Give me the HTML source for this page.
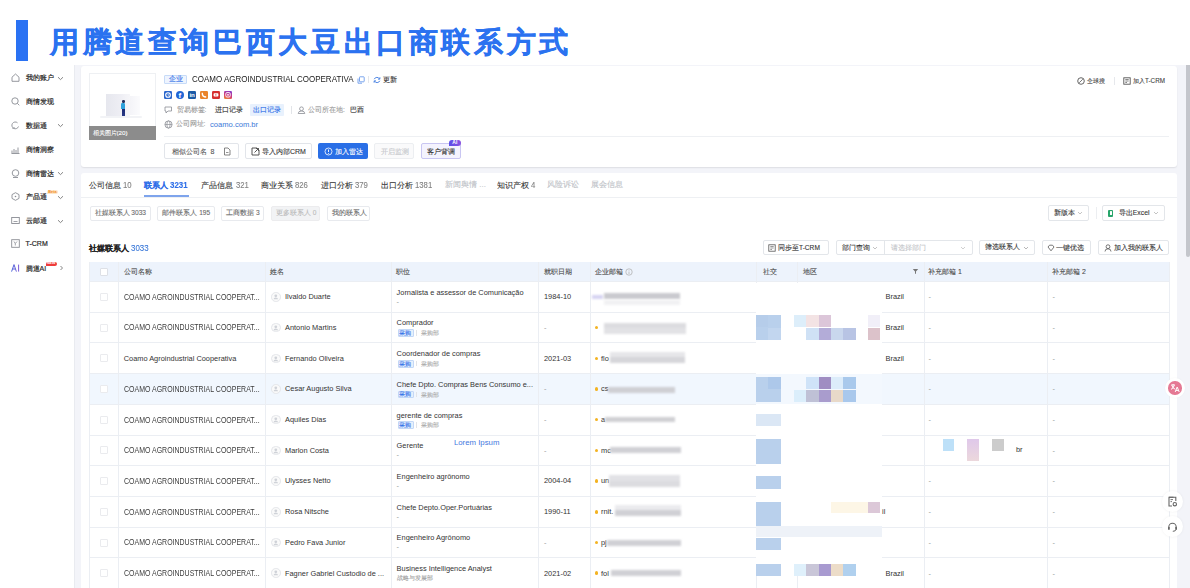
<!DOCTYPE html><html><head><meta charset="utf-8"><style>
*{box-sizing:border-box;margin:0;padding:0}
html,body{width:1190px;height:588px;overflow:hidden;background:#fff;font-family:"Liberation Sans",sans-serif;color:#333}
div,span{position:absolute;white-space:nowrap}
.t{line-height:1}
.c{-webkit-text-stroke-width:0.1px}
.btn{border:1px solid #dfe2e8;border-radius:2px;background:#fff}
.ico{line-height:0}
</style></head><body>

<div style="left:16px;top:20px;width:12px;height:41px;background:#2a72f3"></div>
<div class="t" style="left:50px;top:28.2px;font-size:28.6px;letter-spacing:3.62px;font-weight:700;color:#2b72f0;-webkit-text-stroke:0.4px #2b72f0">用腾道查询巴西大豆出口商联系方式</div>
<div style="left:74px;top:65px;width:1116px;height:523px;background:#f3f4f9"></div>
<div style="left:0px;top:65px;width:74px;height:523px;background:#fff"></div>
<div style="left:74px;top:65px;width:1px;height:523px;background:#e9ebf0"></div>
<div style="left:1186px;top:65px;width:4px;height:192px;background:#c4c6cc;border-radius:0 0 2px 2px"></div>
<svg style="position:absolute;left:11px;top:73.2px" width="9" height="9" viewBox="0 0 9 9"><path d="M1 4.2 L4.5 1 L8 4.2 V8.3 H1 Z" fill="none" stroke="#8a8d94" stroke-width="0.9"/></svg>
<div class="t c" style="left:25.6px;top:74.20px;font-size:7px;height:7px;color:#2a2a2a;-webkit-text-stroke-width:0.2px">我的账户</div>
<svg style="position:absolute;left:56.8px;top:75.5px" width="7" height="5" viewBox="0 0 7 5"><path d="M1 1.2 L3.5 3.6 L6 1.2" fill="none" stroke="#777" stroke-width="0.9"/></svg>
<svg style="position:absolute;left:11px;top:96.9px" width="9" height="9" viewBox="0 0 9 9"><circle cx="4" cy="4" r="3.2" fill="none" stroke="#8a8d94" stroke-width="0.9"/><path d="M6.4 6.4 L8.3 8.3" stroke="#8a8d94" stroke-width="0.9"/></svg>
<div class="t c" style="left:25.6px;top:97.90px;font-size:7px;height:7px;color:#2a2a2a;-webkit-text-stroke-width:0.2px">商情发现</div>
<svg style="position:absolute;left:11px;top:120.7px" width="9" height="9" viewBox="0 0 9 9"><path d="M7.5 5.5 A3.4 3.4 0 1 1 6.5 1.8" fill="none" stroke="#8a8d94" stroke-width="0.9"/><path d="M1.5 8 L3.5 6" stroke="#8a8d94" stroke-width="0.9"/></svg>
<div class="t c" style="left:25.6px;top:121.70px;font-size:7px;height:7px;color:#2a2a2a;-webkit-text-stroke-width:0.2px">数据通</div>
<svg style="position:absolute;left:56.8px;top:123.0px" width="7" height="5" viewBox="0 0 7 5"><path d="M1 1.2 L3.5 3.6 L6 1.2" fill="none" stroke="#777" stroke-width="0.9"/></svg>
<svg style="position:absolute;left:11px;top:144.6px" width="9" height="9" viewBox="0 0 9 9"><path d="M1 8.3 V5.5 M3 8.3 V4 M5 8.3 V5 M7 8.3 V2.5 M0.5 8.5 H8.5" stroke="#8a8d94" stroke-width="0.9"/></svg>
<div class="t c" style="left:25.6px;top:145.60px;font-size:7px;height:7px;color:#2a2a2a;-webkit-text-stroke-width:0.2px">商情洞察</div>
<svg style="position:absolute;left:11px;top:168.8px" width="9" height="9" viewBox="0 0 9 9"><circle cx="4.5" cy="4" r="3.3" fill="none" stroke="#8a8d94" stroke-width="0.9"/><path d="M2 8.5 H7" stroke="#8a8d94" stroke-width="0.9"/></svg>
<div class="t c" style="left:25.6px;top:169.80px;font-size:7px;height:7px;color:#2a2a2a;-webkit-text-stroke-width:0.2px">商情雷达</div>
<svg style="position:absolute;left:56.8px;top:171.10000000000002px" width="7" height="5" viewBox="0 0 7 5"><path d="M1 1.2 L3.5 3.6 L6 1.2" fill="none" stroke="#777" stroke-width="0.9"/></svg>
<svg style="position:absolute;left:11px;top:192.2px" width="9" height="9" viewBox="0 0 9 9"><path d="M4.5 0.7 L8 2.6 V6.4 L4.5 8.3 L1 6.4 V2.6 Z" fill="none" stroke="#8a8d94" stroke-width="0.9"/><circle cx="4.5" cy="4.5" r="0.8" fill="#8a8d94"/></svg>
<div class="t c" style="left:25.6px;top:193.20px;font-size:7px;height:7px;color:#2a2a2a;-webkit-text-stroke-width:0.2px">产品通</div>
<svg style="position:absolute;left:56.8px;top:194.5px" width="7" height="5" viewBox="0 0 7 5"><path d="M1 1.2 L3.5 3.6 L6 1.2" fill="none" stroke="#777" stroke-width="0.9"/></svg>
<svg style="position:absolute;left:11px;top:216.3px" width="9" height="9" viewBox="0 0 9 9"><rect x="0.7" y="1.5" width="7.6" height="6" fill="none" stroke="#8a8d94" stroke-width="0.9"/><path d="M2.5 5.5 H6.5" stroke="#8a8d94" stroke-width="0.8"/></svg>
<div class="t c" style="left:25.6px;top:217.30px;font-size:7px;height:7px;color:#2a2a2a;-webkit-text-stroke-width:0.2px">云邮通</div>
<svg style="position:absolute;left:56.8px;top:218.60000000000002px" width="7" height="5" viewBox="0 0 7 5"><path d="M1 1.2 L3.5 3.6 L6 1.2" fill="none" stroke="#777" stroke-width="0.9"/></svg>
<svg style="position:absolute;left:11px;top:239.2px" width="9" height="9" viewBox="0 0 9 9"><rect x="0.7" y="0.7" width="7.6" height="7.6" fill="none" stroke="#8a8d94" stroke-width="0.9"/><path d="M3 2.5 L4.3 4.5 L6 2.5 M4.3 4.5 V6.5" fill="none" stroke="#8a8d94" stroke-width="0.8"/></svg>
<div class="t" style="left:25.6px;top:240.20px;font-size:7px;height:7px;color:#2a2a2a;-webkit-text-stroke-width:0.2px">T-CRM</div>
<svg style="position:absolute;left:10.5px;top:264.2px" width="9" height="8" viewBox="0 0 9 8"><defs><linearGradient id="aig" x1="0" x2="1"><stop offset="0" stop-color="#4a64d8"/><stop offset="1" stop-color="#7a5ad8"/></linearGradient></defs><path d="M0.6 7.6 L3 0.6 L5.4 7.6 M1.5 5 H4.5 M7.6 0.6 V7.6" fill="none" stroke="url(#aig)" stroke-width="1"/></svg>
<div class="t c" style="left:25.6px;top:264.70px;font-size:7px;height:7px;color:#2a2a2a;-webkit-text-stroke-width:0.2px">腾道AI</div>
<svg style="position:absolute;left:59px;top:265.2px" width="5" height="6" viewBox="0 0 5 6"><path d="M1.5 1 L3.5 3 L1.5 5" fill="none" stroke="#666" stroke-width="0.8"/></svg>
<div style="left:47.4px;top:190.4px;width:10.2px;height:4px;background:#fde6c8;border-radius:2px 2px 2px 0"></div>
<div class="t" style="left:48.3px;top:190.6px;font-size:3.8px;color:#f08a20;font-weight:700">Beta</div>
<div style="left:45.5px;top:261.6px;width:11.3px;height:4.6px;background:#ee3b3b;border-radius:2px 2px 2px 0"></div>
<div class="t" style="left:47px;top:262.2px;font-size:3.6px;color:#fff;font-weight:700">NEW</div>
<div style="left:81px;top:66px;width:1096px;height:101px;background:#fff;border-radius:3px;box-shadow:0 1px 1.5px rgba(0,0,0,0.09)"></div>
<div style="left:89px;top:73px;width:67px;height:67px;background:#fff;border:1px solid #eef0f3"></div>
<div style="left:105.5px;top:94px;width:24px;height:23.5px;background:linear-gradient(90deg,#e6e7ee,#eeeef4 60%,#f6f6f9);"></div>
<div style="left:129.5px;top:96px;width:10px;height:19px;background:linear-gradient(90deg,#f4f4f8,#fbfbfd)"></div>
<div style="left:100px;top:115.8px;width:42px;height:2px;background:#f2f3f6;border-radius:1px"></div>
<div style="left:122.2px;top:100.3px;width:2.4px;height:2.4px;background:#24305e;border-radius:50%"></div>
<div style="left:121.3px;top:102.6px;width:4.2px;height:6.6px;background:#2fa2dc;border-radius:1.2px 1.2px 0 0"></div>
<div style="left:121.8px;top:109.2px;width:3.2px;height:7px;background:linear-gradient(180deg,#1c2a72,#2a3a88)"></div>
<div style="left:89px;top:125.8px;width:67px;height:14.2px;background:#8c8c8c"></div>
<div class="t c" style="left:92.5px;top:129.90px;font-size:6.2px;height:6.2px;color:#fff;">相关图片(20)</div>
<div style="left:164.2px;top:74.7px;width:23.2px;height:9.8px;background:#eef4fe;border:1px solid #c7dbf8;border-radius:1px"></div>
<div class="t c" style="left:169px;top:76.20px;font-size:6.8px;height:6.8px;color:#2d6ee8;">企业</div>
<div class="t" style="left:191.5px;top:74.95px;font-size:9.3px;height:9.3px;color:#222;transform:scaleX(0.86);transform-origin:0 50%;">COAMO AGROINDUSTRIAL COOPERATIVA</div>
<svg style="position:absolute;left:356.5px;top:75.5px" width="8" height="8" viewBox="0 0 8 8"><rect x="2.5" y="0.8" width="4.7" height="5" rx="0.6" fill="none" stroke="#5b8fe8" stroke-width="0.8"/><path d="M1 2.5 V7.2 H5" fill="none" stroke="#5b8fe8" stroke-width="0.8"/></svg>
<div style="left:368px;top:76px;width:0.8px;height:7px;background:#e4e6ea"></div>
<svg style="position:absolute;left:372.5px;top:75.5px" width="8" height="8" viewBox="0 0 8 8"><path d="M6.6 3 A3 3 0 0 0 1.2 3.2 M1.4 5 A3 3 0 0 0 6.8 4.8" fill="none" stroke="#3b78e0" stroke-width="0.9"/><path d="M6.9 1.2 V3.2 H5" fill="none" stroke="#3b78e0" stroke-width="0.8"/><path d="M1.1 6.8 V4.8 H3" fill="none" stroke="#3b78e0" stroke-width="0.8"/></svg>
<div class="t c" style="left:383px;top:76.10px;font-size:7px;height:7px;color:#333;">更新</div>
<div style="left:164.2px;top:91px;width:8px;height:7.5px;background:#2a66cc;border-radius:1.2px"></div>
<svg style="position:absolute;left:164.2px;top:91px" width="8" height="7.5" viewBox="0 0 8 7.5"><circle cx="4" cy="4" r="2.3" fill="none" stroke="#fff" stroke-width="1.1"/><path d="M4 2.8 V4.2 H5" fill="none" stroke="#fff" stroke-width="0.6"/></svg>
<div style="left:176.0px;top:90.6px;width:8.4px;height:8.4px;background:#2166d6;border-radius:50%"></div>
<div class="t" style="left:178.5px;top:91.6px;font-size:8px;font-weight:700;color:#fff">f</div>
<div style="left:188.2px;top:91px;width:8px;height:7.5px;background:#1b5aa6;border-radius:1.2px"></div>
<div class="t" style="left:189.5px;top:92.2px;font-size:6.2px;font-weight:700;color:#fff;letter-spacing:-0.2px">in</div>
<div style="left:200.2px;top:91px;width:8px;height:7.5px;background:#ea842a;border-radius:1.2px"></div>
<svg style="position:absolute;left:200.2px;top:91px" width="8" height="7.5" viewBox="0 0 8 7.5"><path d="M2.3 1.8 Q2 6 6.2 6" fill="none" stroke="#fff" stroke-width="1.4"/></svg>
<div style="left:212.2px;top:91px;width:8px;height:7.5px;background:#d62e2e;border-radius:1.2px"></div>
<svg style="position:absolute;left:212.2px;top:91px" width="8" height="7.5" viewBox="0 0 8 7.5"><rect x="1.6" y="2.2" width="4.8" height="3.4" rx="0.8" fill="#fff"/><path d="M3.4 3 L4.9 3.9 L3.4 4.8 Z" fill="#d62e2e"/></svg>
<div style="left:224.2px;top:91px;width:8px;height:7.5px;background:linear-gradient(200deg,#7b3fd4,#d23a7a 55%,#f0902a);border-radius:1.2px"></div>
<svg style="position:absolute;left:224.2px;top:91px" width="8" height="7.5" viewBox="0 0 8 7.5"><rect x="1.8" y="1.6" width="4.4" height="4.4" rx="1.2" fill="none" stroke="#fff" stroke-width="0.9"/><circle cx="4" cy="3.8" r="0.9" fill="#fff"/></svg>
<svg style="position:absolute;left:164px;top:106.2px" width="9" height="8" viewBox="0 0 9 8"><path d="M1 1 H7.5 V5 H4 L2 7 V5 H1 Z" fill="none" stroke="#8a8d94" stroke-width="0.8"/></svg>
<div class="t c" style="left:176.5px;top:106.80px;font-size:6.8px;height:6.8px;color:#999;">贸易标签:</div>
<div class="t c" style="left:214.5px;top:106.80px;font-size:6.8px;height:6.8px;color:#333;">进口记录</div>
<div style="left:249.5px;top:104.2px;width:34px;height:12px;background:#e8f1fd;border-radius:1px"></div>
<div class="t c" style="left:253px;top:106.80px;font-size:6.8px;height:6.8px;color:#2d6ee8;">出口记录</div>
<div style="left:290.5px;top:106px;width:0.8px;height:8px;background:#e2e4e8"></div>
<svg style="position:absolute;left:296.5px;top:106.2px" width="9" height="8" viewBox="0 0 9 8"><circle cx="4.5" cy="2.8" r="1.9" fill="none" stroke="#8a8d94" stroke-width="0.8"/><path d="M1.2 7.5 Q1.2 5 4.5 5 Q7.8 5 7.8 7.5 Z" fill="none" stroke="#8a8d94" stroke-width="0.8"/></svg>
<div class="t c" style="left:308px;top:106.80px;font-size:6.8px;height:6.8px;color:#999;">公司所在地:</div>
<div class="t c" style="left:350px;top:106.80px;font-size:6.8px;height:6.8px;color:#333;">巴西</div>
<svg style="position:absolute;left:164px;top:120.2px" width="9" height="9" viewBox="0 0 9 9"><circle cx="4.5" cy="4.5" r="3.6" fill="none" stroke="#8a8d94" stroke-width="0.8"/><ellipse cx="4.5" cy="4.5" rx="1.6" ry="3.6" fill="none" stroke="#8a8d94" stroke-width="0.7"/><path d="M1 4.5 H8" stroke="#8a8d94" stroke-width="0.7"/></svg>
<div class="t c" style="left:175.5px;top:121.00px;font-size:6.8px;height:6.8px;color:#999;">公司网址:</div>
<div class="t" style="left:210px;top:120.60px;font-size:7.6px;height:7.6px;color:#3a78d8;">coamo.com.br</div>
<div style="left:164px;top:136.3px;width:1005px;height:0.8px;background:#eef0f3"></div>
<div style="left:164.4px;top:143px;width:75px;height:16.2px;border:1px solid #e2e5ea;border-radius:2px;background:#fff"></div>
<div class="t c" style="left:171.5px;top:147.60px;font-size:7px;height:7px;color:#555;">相似公司名&nbsp; 8</div>
<svg style="position:absolute;left:223px;top:147px" width="8" height="9" viewBox="0 0 8 9"><path d="M1.5 1 H5 L7 3 V8 H1.5 Z" fill="none" stroke="#666" stroke-width="0.8"/><path d="M3 5.5 H5.5" stroke="#666" stroke-width="0.7"/></svg>
<div style="left:245.4px;top:143px;width:66.4px;height:16.2px;border:1px solid #e2e5ea;border-radius:2px;background:#fff"></div>
<svg style="position:absolute;left:251px;top:147px" width="9" height="9" viewBox="0 0 9 9"><path d="M6 1 H1 V8 H8 V3" fill="none" stroke="#444" stroke-width="0.9"/><path d="M3.5 5.5 L7.5 1.5 M5 1.5 H7.5 V4" fill="none" stroke="#444" stroke-width="0.9"/></svg>
<div class="t c" style="left:262px;top:147.60px;font-size:7px;height:7px;color:#333;">导入内部CRM</div>
<div style="left:318.4px;top:143px;width:49.4px;height:16.2px;background:#2a6fe6;border-radius:2px"></div>
<svg style="position:absolute;left:323.5px;top:147px" width="9" height="9" viewBox="0 0 9 9"><circle cx="4.5" cy="4.5" r="3.5" fill="none" stroke="#fff" stroke-width="0.8"/><path d="M4.5 2.5 V5 M4.5 6 V6.8" stroke="#fff" stroke-width="0.9"/></svg>
<div class="t c" style="left:334.5px;top:147.60px;font-size:7px;height:7px;color:#fff;">加入雷达</div>
<div style="left:374px;top:143px;width:40px;height:16.2px;border:1px solid #eceef1;border-radius:2px;background:#fafafb"></div>
<div class="t c" style="left:380.5px;top:147.60px;font-size:7px;height:7px;color:#c4c6ca;">开启监测</div>
<div style="left:421px;top:143px;width:39.8px;height:16.2px;border:1px solid #c9c6f2;border-radius:2px;background:#f4f3fe"></div>
<div class="t c" style="left:427px;top:147.60px;font-size:7px;height:7px;color:#333;">客户背调</div>
<div style="left:449px;top:139.5px;width:12px;height:6.2px;background:linear-gradient(90deg,#5a4ee8,#8a52e0);border-radius:3px 3px 3px 0"></div>
<div class="t" style="left:452.3px;top:140.2px;font-size:5px;color:#fff;font-weight:700">AI</div>
<svg style="position:absolute;left:1076.5px;top:76.8px" width="8" height="8" viewBox="0 0 8 8"><circle cx="4" cy="4" r="3.3" fill="none" stroke="#555" stroke-width="0.9"/><path d="M2.2 5.8 L5.8 2.2" stroke="#555" stroke-width="0.8"/></svg>
<div class="t c" style="left:1086.7px;top:78.05px;font-size:6.3px;height:6.3px;color:#444;">全球搜</div>
<div style="left:1114.3px;top:76.5px;width:0.8px;height:8px;background:#e6e8ec"></div>
<svg style="position:absolute;left:1123px;top:76.8px" width="8" height="8" viewBox="0 0 8 8"><rect x="0.8" y="0.8" width="6.4" height="6.4" fill="none" stroke="#555" stroke-width="0.9"/><path d="M2.3 2.5 H5.7 M2.3 4 H5.7 M2.3 5.5 H4" stroke="#555" stroke-width="0.7"/></svg>
<div class="t c" style="left:1133px;top:78.05px;font-size:6.3px;height:6.3px;color:#444;">加入T-CRM</div>
<div style="left:81px;top:172.5px;width:1096px;height:420px;background:#fff;border-radius:3px"></div>
<div class="t c" style="left:88.8px;top:181.00px;font-size:8px;height:8px;color:#333;">公司信息<span style="position:static;display:inline-block;color:#808080;font-size:9px;transform:scaleX(0.86);transform-origin:0 50%;vertical-align:-0.5px;margin-left:2.4px">10</span></div>
<div class="t c" style="left:144px;top:181.00px;font-size:8px;height:8px;color:#2d6ee8;"><b>联系人</b><span style="position:static;display:inline-block;font-size:9px;font-weight:700;transform:scaleX(0.88);transform-origin:0 50%;vertical-align:-0.5px;margin-left:2.4px">3231</span></div>
<div class="t c" style="left:201.4px;top:181.00px;font-size:8px;height:8px;color:#333;">产品信息<span style="position:static;display:inline-block;color:#808080;font-size:9px;transform:scaleX(0.86);transform-origin:0 50%;vertical-align:-0.5px;margin-left:2.4px">321</span></div>
<div class="t c" style="left:261px;top:181.00px;font-size:8px;height:8px;color:#333;">商业关系<span style="position:static;display:inline-block;color:#808080;font-size:9px;transform:scaleX(0.86);transform-origin:0 50%;vertical-align:-0.5px;margin-left:2.4px">826</span></div>
<div class="t c" style="left:320.6px;top:181.00px;font-size:8px;height:8px;color:#333;">进口分析<span style="position:static;display:inline-block;color:#808080;font-size:9px;transform:scaleX(0.86);transform-origin:0 50%;vertical-align:-0.5px;margin-left:2.4px">379</span></div>
<div class="t c" style="left:380.6px;top:181.00px;font-size:8px;height:8px;color:#333;">出口分析<span style="position:static;display:inline-block;color:#808080;font-size:9px;transform:scaleX(0.86);transform-origin:0 50%;vertical-align:-0.5px;margin-left:2.4px">1381</span></div>
<div class="t c" style="left:445px;top:181.00px;font-size:8px;height:8px;color:#c0c3c8;">新闻舆情 ...</div>
<div class="t c" style="left:496.6px;top:181.00px;font-size:8px;height:8px;color:#333;">知识产权<span style="position:static;display:inline-block;color:#808080;font-size:9px;transform:scaleX(0.86);transform-origin:0 50%;vertical-align:-0.5px;margin-left:2.4px">4</span></div>
<div class="t c" style="left:547px;top:181.00px;font-size:8px;height:8px;color:#c0c3c8;">风险诉讼</div>
<div class="t c" style="left:590.9px;top:181.00px;font-size:8px;height:8px;color:#c0c3c8;">展会信息</div>
<div style="left:144px;top:195.2px;width:45.2px;height:1.4px;background:#7ea4ec"></div>
<div style="left:81px;top:196.6px;width:1096px;height:0.8px;background:#eef0f3"></div>
<div style="left:89.5px;top:206px;width:61.9px;height:14.7px;border:1px solid #e8eaee;border-radius:2px;background:#fff"></div>
<div class="t c" style="left:94.5px;top:210.10px;font-size:6.6px;height:6.6px;color:#6a6a6a;">社媒联系人 3033</div>
<div style="left:157.3px;top:206px;width:58.2px;height:14.7px;border:1px solid #e8eaee;border-radius:2px;background:#fff"></div>
<div class="t c" style="left:162.3px;top:210.10px;font-size:6.6px;height:6.6px;color:#6a6a6a;">邮件联系人 195</div>
<div style="left:221.2px;top:206px;width:43.2px;height:14.7px;border:1px solid #e8eaee;border-radius:2px;background:#fff"></div>
<div class="t c" style="left:226.2px;top:210.10px;font-size:6.6px;height:6.6px;color:#6a6a6a;">工商数据 3</div>
<div style="left:270.8px;top:206px;width:49.5px;height:14.7px;border:1px solid #ececee;border-radius:2px;background:#f2f3f5"></div>
<div class="t c" style="left:275.8px;top:210.10px;font-size:6.6px;height:6.6px;color:#bbb;">更多联系人 0</div>
<div style="left:327px;top:206px;width:43px;height:14.7px;border:1px solid #e8eaee;border-radius:2px;background:#fff"></div>
<div class="t c" style="left:332px;top:210.10px;font-size:6.6px;height:6.6px;color:#6a6a6a;">我的联系人</div>
<div style="left:1047.6px;top:205.3px;width:41.8px;height:15.9px;border:1px solid #e3e6ea;border-radius:2px;background:#fff"></div>
<div class="t c" style="left:1054px;top:209.90px;font-size:6.8px;height:6.8px;color:#333;">新版本</div>
<svg style="position:absolute;left:1077px;top:211px" width="6" height="4" viewBox="0 0 6 4"><path d="M1 1 L3 3 L5 1" fill="none" stroke="#aaa" stroke-width="0.7"/></svg>
<div style="left:1095.6px;top:207px;width:0.8px;height:12px;background:#eceef1"></div>
<div style="left:1102.4px;top:205.3px;width:62.6px;height:15.9px;border:1px solid #e3e6ea;border-radius:2px;background:#fff"></div>
<div style="left:1108.2px;top:209.5px;width:5.3px;height:7.5px;background:#27a56a;border-radius:1px"></div>
<div style="left:1109.6px;top:211.3px;width:2.6px;height:3.8px;background:#fff;border-radius:0.5px"></div>
<div class="t c" style="left:1118.8px;top:209.90px;font-size:6.8px;height:6.8px;color:#333;">导出Excel</div>
<svg style="position:absolute;left:1153px;top:211px" width="6" height="4" viewBox="0 0 6 4"><path d="M1 1 L3 3 L5 1" fill="none" stroke="#aaa" stroke-width="0.7"/></svg>
<div class="t c" style="left:88.8px;top:243.70px;font-size:8px;height:8px;color:#222;"><b>社媒联系人</b> <span style="position:static;display:inline-block;color:#3a78d8;font-size:9px;transform:scaleX(0.88);transform-origin:0 50%;vertical-align:-0.5px">3033</span></div>
<div style="left:763px;top:240.4px;width:65.8px;height:14.7px;border:1px solid #e3e6ea;border-radius:2px;background:#fff"></div>
<svg style="position:absolute;left:767.5px;top:243.8px" width="8" height="8" viewBox="0 0 8 8"><rect x="0.8" y="0.8" width="6.4" height="6.4" fill="none" stroke="#555" stroke-width="0.8"/><path d="M2.3 2.5 H5.7 M2.3 4 H5.7 M2.3 5.5 H4" stroke="#555" stroke-width="0.6"/></svg>
<div class="t c" style="left:778px;top:244.50px;font-size:6.6px;height:6.6px;color:#333;">同步至T-CRM</div>
<div style="left:836.2px;top:240.4px;width:137px;height:14.7px;border:1px solid #e3e6ea;border-radius:2px;background:#fff"></div>
<div style="left:883.9px;top:240.4px;width:0.8px;height:14.7px;background:#e3e6ea"></div>
<div class="t c" style="left:842px;top:244.50px;font-size:6.6px;height:6.6px;color:#333;">部门查询</div>
<svg style="position:absolute;left:872px;top:246px" width="6" height="4" viewBox="0 0 6 4"><path d="M1 1 L3 3 L5 1" fill="none" stroke="#aaa" stroke-width="0.7"/></svg>
<div class="t c" style="left:891px;top:244.50px;font-size:6.6px;height:6.6px;color:#c2c4c8;">请选择部门</div>
<svg style="position:absolute;left:960px;top:246px" width="6" height="4" viewBox="0 0 6 4"><path d="M1 1 L3 3 L5 1" fill="none" stroke="#bbb" stroke-width="0.7"/></svg>
<div style="left:979.3px;top:240.4px;width:56.2px;height:14.7px;border:1px solid #e3e6ea;border-radius:2px;background:#fff"></div>
<div class="t c" style="left:985px;top:244.40px;font-size:6.8px;height:6.8px;color:#333;">筛选联系人</div>
<svg style="position:absolute;left:1023px;top:246px" width="6" height="4" viewBox="0 0 6 4"><path d="M1 1 L3 3 L5 1" fill="none" stroke="#999" stroke-width="0.7"/></svg>
<div style="left:1042px;top:240.4px;width:49.3px;height:14.7px;border:1px solid #e3e6ea;border-radius:2px;background:#fff"></div>
<svg style="position:absolute;left:1047px;top:243.8px" width="8" height="8" viewBox="0 0 8 8"><path d="M1 3 L2.5 1.2 H5.5 L7 3 L4 6.8 Z" fill="none" stroke="#555" stroke-width="0.8"/></svg>
<div class="t c" style="left:1055.5px;top:244.50px;font-size:6.6px;height:6.6px;color:#333;">一键优选</div>
<div style="left:1098.3px;top:240.4px;width:70.7px;height:14.7px;border:1px solid #e3e6ea;border-radius:2px;background:#fff"></div>
<svg style="position:absolute;left:1103.5px;top:243.5px" width="8" height="8" viewBox="0 0 8 8"><circle cx="4" cy="2.7" r="1.9" fill="none" stroke="#555" stroke-width="0.8"/><path d="M1 7.5 Q1 4.8 4 4.8 Q7 4.8 7 7.5" fill="none" stroke="#555" stroke-width="0.8"/></svg>
<div class="t c" style="left:1114px;top:244.50px;font-size:6.6px;height:6.6px;color:#333;">加入我的联系人</div>
<div style="left:89px;top:261.5px;width:1080px;height:20.0px;background:#edf3fc"></div>
<div style="left:89px;top:373.6px;width:1080px;height:30.7px;background:#f1f7fe"></div>
<div style="left:89px;top:281.0px;width:1080px;height:0.8px;background:#ebeef3"></div>
<div style="left:89px;top:311.7px;width:1080px;height:0.8px;background:#ebeef3"></div>
<div style="left:89px;top:342.4px;width:1080px;height:0.8px;background:#ebeef3"></div>
<div style="left:89px;top:373.1px;width:1080px;height:0.8px;background:#ebeef3"></div>
<div style="left:89px;top:403.8px;width:1080px;height:0.8px;background:#ebeef3"></div>
<div style="left:89px;top:434.5px;width:1080px;height:0.8px;background:#ebeef3"></div>
<div style="left:89px;top:465.2px;width:1080px;height:0.8px;background:#ebeef3"></div>
<div style="left:89px;top:495.9px;width:1080px;height:0.8px;background:#ebeef3"></div>
<div style="left:89px;top:526.6px;width:1080px;height:0.8px;background:#ebeef3"></div>
<div style="left:89px;top:557.3px;width:1080px;height:0.8px;background:#ebeef3"></div>
<div style="left:89px;top:588.0px;width:1080px;height:0.8px;background:#ebeef3"></div>
<div style="left:117.69999999999999px;top:261.5px;width:0.8px;height:326.5px;background:#ebeef3"></div>
<div style="left:264.90000000000003px;top:261.5px;width:0.8px;height:326.5px;background:#ebeef3"></div>
<div style="left:390.70000000000005px;top:261.5px;width:0.8px;height:326.5px;background:#ebeef3"></div>
<div style="left:538.2px;top:261.5px;width:0.8px;height:326.5px;background:#ebeef3"></div>
<div style="left:589.7px;top:261.5px;width:0.8px;height:326.5px;background:#ebeef3"></div>
<div style="left:756.1px;top:261.5px;width:0.8px;height:326.5px;background:#ebeef3"></div>
<div style="left:796.9px;top:261.5px;width:0.8px;height:326.5px;background:#ebeef3"></div>
<div style="left:923.5px;top:261.5px;width:0.8px;height:326.5px;background:#ebeef3"></div>
<div style="left:1046.6px;top:261.5px;width:0.8px;height:326.5px;background:#ebeef3"></div>
<div style="left:88.6px;top:261.5px;width:0.8px;height:326.5px;background:#ebeef3"></div>
<div style="left:1168.6px;top:261.5px;width:0.8px;height:326.5px;background:#ebeef3"></div>
<div style="left:100px;top:267.5px;width:8px;height:8px;border:1px solid #dde0e6;border-radius:1px;background:#fff"></div>
<div class="t c" style="left:123.7px;top:268.75px;font-size:6.9px;height:6.9px;color:#4a4a4a;">公司名称</div>
<div class="t c" style="left:270.1px;top:268.75px;font-size:6.9px;height:6.9px;color:#4a4a4a;">姓名</div>
<div class="t c" style="left:396.1px;top:268.75px;font-size:6.9px;height:6.9px;color:#4a4a4a;">职位</div>
<div class="t c" style="left:544px;top:268.75px;font-size:6.9px;height:6.9px;color:#4a4a4a;">就职日期</div>
<div class="t c" style="left:595.1px;top:268.75px;font-size:6.9px;height:6.9px;color:#4a4a4a;">企业邮箱</div>
<div class="t c" style="left:763px;top:268.75px;font-size:6.9px;height:6.9px;color:#4a4a4a;">社交</div>
<div class="t c" style="left:803px;top:268.75px;font-size:6.9px;height:6.9px;color:#4a4a4a;">地区</div>
<div class="t c" style="left:928px;top:268.75px;font-size:6.9px;height:6.9px;color:#4a4a4a;">补充邮箱 1</div>
<div class="t c" style="left:1052px;top:268.75px;font-size:6.9px;height:6.9px;color:#4a4a4a;">补充邮箱 2</div>
<svg style="position:absolute;left:625px;top:267.8px" width="8" height="8" viewBox="0 0 8 8"><circle cx="4" cy="4" r="3.2" fill="none" stroke="#aaa" stroke-width="0.7"/><path d="M4 3.5 V6 M4 2.3 V2.9" stroke="#aaa" stroke-width="0.7"/></svg>
<svg style="position:absolute;left:911.5px;top:268px" width="7" height="7" viewBox="0 0 7 7"><path d="M0.8 1 H6.2 L4 3.5 V6 L3 5.5 V3.5 Z" fill="#777"/></svg>
<div style="left:100px;top:292.9px;width:8px;height:8px;border:1px solid #eaebee;border-radius:1px;background:#fff"></div>
<div class="t" style="left:123.7px;top:292.70px;font-size:8.4px;height:8.4px;color:#3d3d3d;transform:scaleX(0.835);transform-origin:0 50%;">COAMO AGROINDUSTRIAL COOPERAT...</div>
<div style="left:271px;top:292.09999999999997px;width:9.6px;height:9.6px;border:0.8px solid #e4e6ea;border-radius:50%;background:#fafafa"></div>
<svg style="position:absolute;left:271px;top:292.09999999999997px" width="9.6" height="9.6" viewBox="0 0 9.6 9.6"><circle cx="4.8" cy="3.8" r="1.4" fill="#cfd2d8"/><path d="M2.6 7.2 Q2.6 5.4 4.8 5.4 Q7 5.4 7 7.2 Z" fill="#cfd2d8"/></svg>
<div class="t" style="left:285px;top:293.20px;font-size:7.4px;height:7.4px;color:#333;">Ilvaldo Duarte</div>
<div class="t" style="left:396.6px;top:288.70px;font-size:7.4px;height:7.4px;color:#333;">Jornalista e assessor de Comunicação</div>
<div class="t" style="left:396.6px;top:297.80px;font-size:7.4px;height:7.4px;color:#999;">-</div>
<div class="t" style="left:544px;top:293.20px;font-size:7.4px;height:7.4px;color:#333;">1984-10</div>
<div style="left:592px;top:294.8px;width:11px;height:3.8000000000000114px;background:#d6d4f2;filter:blur(0.9px)"></div>
<div style="left:604px;top:293.2px;width:76.29999999999995px;height:5.800000000000011px;background:#cacacf;filter:blur(0.9px)"></div>
<div style="left:604px;top:299.5px;width:76px;height:5.0px;background:#f1f1f3;filter:blur(0.9px)"></div>
<div class="t" style="left:885.5px;top:293.20px;font-size:7.4px;height:7.4px;color:#333;">Brazil</div>
<div class="t" style="left:928.5px;top:293.20px;font-size:7.4px;height:7.4px;color:#999;">-</div>
<div class="t" style="left:1052.5px;top:293.20px;font-size:7.4px;height:7.4px;color:#999;">-</div>
<div style="left:100px;top:323.59999999999997px;width:8px;height:8px;border:1px solid #eaebee;border-radius:1px;background:#fff"></div>
<div class="t" style="left:123.7px;top:323.40px;font-size:8.4px;height:8.4px;color:#3d3d3d;transform:scaleX(0.835);transform-origin:0 50%;">COAMO AGROINDUSTRIAL COOPERAT...</div>
<div style="left:271px;top:322.79999999999995px;width:9.6px;height:9.6px;border:0.8px solid #e4e6ea;border-radius:50%;background:#fafafa"></div>
<svg style="position:absolute;left:271px;top:322.79999999999995px" width="9.6" height="9.6" viewBox="0 0 9.6 9.6"><circle cx="4.8" cy="3.8" r="1.4" fill="#cfd2d8"/><path d="M2.6 7.2 Q2.6 5.4 4.8 5.4 Q7 5.4 7 7.2 Z" fill="#cfd2d8"/></svg>
<div class="t" style="left:285px;top:323.90px;font-size:7.4px;height:7.4px;color:#333;">Antonio Martins</div>
<div class="t" style="left:396.6px;top:319.40px;font-size:7.4px;height:7.4px;color:#333;">Comprador</div>
<div style="left:397.7px;top:329.3px;width:15.9px;height:7.6px;background:#e6f0fd;border:0.6px solid #c3d8f6;border-radius:1px"></div>
<div class="t c" style="left:399.2px;top:329.90px;font-size:6.4px;height:6.4px;color:#2d6ee8;">采购</div>
<div style="left:416.4px;top:330.2px;width:0.7px;height:5.6px;background:#e2e4e8"></div>
<div class="t c" style="left:420.5px;top:330.10px;font-size:6px;height:6px;color:#a8a8a8;">采购部</div>
<div class="t" style="left:544px;top:323.90px;font-size:7.4px;height:7.4px;color:#999;">-</div>
<div style="left:594.7px;top:325.80px;width:3.6px;height:3.6px;border-radius:50%;background:#f3b322;filter:blur(0.3px)"></div>
<div style="left:603.6px;top:322.9px;width:82.79999999999995px;height:10.700000000000045px;background:linear-gradient(180deg,#dcdce0 0%,#dcdce0 50%,#e2e2e5 50%,#e2e2e5 100%);filter:blur(0.9px)"></div>
<div class="t" style="left:885.5px;top:323.90px;font-size:7.4px;height:7.4px;color:#333;">Brazil</div>
<div class="t" style="left:928.5px;top:323.90px;font-size:7.4px;height:7.4px;color:#999;">-</div>
<div class="t" style="left:1052.5px;top:323.90px;font-size:7.4px;height:7.4px;color:#999;">-</div>
<div style="left:100px;top:354.29999999999995px;width:8px;height:8px;border:1px solid #eaebee;border-radius:1px;background:#fff"></div>
<div class="t" style="left:123.7px;top:354.60px;font-size:7.4px;height:7.4px;color:#333;">Coamo Agroindustrial Cooperativa</div>
<div style="left:271px;top:353.49999999999994px;width:9.6px;height:9.6px;border:0.8px solid #e4e6ea;border-radius:50%;background:#fafafa"></div>
<svg style="position:absolute;left:271px;top:353.49999999999994px" width="9.6" height="9.6" viewBox="0 0 9.6 9.6"><circle cx="4.8" cy="3.8" r="1.4" fill="#cfd2d8"/><path d="M2.6 7.2 Q2.6 5.4 4.8 5.4 Q7 5.4 7 7.2 Z" fill="#cfd2d8"/></svg>
<div class="t" style="left:285px;top:354.60px;font-size:7.4px;height:7.4px;color:#333;">Fernando Oliveira</div>
<div class="t" style="left:396.6px;top:350.10px;font-size:7.4px;height:7.4px;color:#333;">Coordenador de compras</div>
<div style="left:397.7px;top:360.0px;width:15.9px;height:7.6px;background:#e6f0fd;border:0.6px solid #c3d8f6;border-radius:1px"></div>
<div class="t c" style="left:399.2px;top:360.60px;font-size:6.4px;height:6.4px;color:#2d6ee8;">采购</div>
<div style="left:416.4px;top:360.9px;width:0.7px;height:5.6px;background:#e2e4e8"></div>
<div class="t c" style="left:420.5px;top:360.80px;font-size:6px;height:6px;color:#a8a8a8;">采购部</div>
<div class="t" style="left:544px;top:354.60px;font-size:7.4px;height:7.4px;color:#333;">2021-03</div>
<div style="left:594.7px;top:356.50px;width:3.6px;height:3.6px;border-radius:50%;background:#f3b322;filter:blur(0.3px)"></div>
<div class="t" style="left:601px;top:354.60px;font-size:7.4px;height:7.4px;color:#333;">flo</div>
<div style="left:610px;top:352px;width:75px;height:11px;background:linear-gradient(180deg,#e6e6e9 0%,#e6e6e9 50%,#d6d6da 50%,#d6d6da 100%);filter:blur(0.9px)"></div>
<div class="t" style="left:885.5px;top:354.60px;font-size:7.4px;height:7.4px;color:#333;">Brazil</div>
<div class="t" style="left:928.5px;top:354.60px;font-size:7.4px;height:7.4px;color:#999;">-</div>
<div class="t" style="left:1052.5px;top:354.60px;font-size:7.4px;height:7.4px;color:#999;">-</div>
<div style="left:100px;top:385.0px;width:8px;height:8px;border:1px solid #eaebee;border-radius:1px;background:#fff"></div>
<div class="t" style="left:123.7px;top:384.80px;font-size:8.4px;height:8.4px;color:#3d3d3d;transform:scaleX(0.835);transform-origin:0 50%;">COAMO AGROINDUSTRIAL COOPERAT...</div>
<div style="left:271px;top:384.2px;width:9.6px;height:9.6px;border:0.8px solid #e4e6ea;border-radius:50%;background:#fafafa"></div>
<svg style="position:absolute;left:271px;top:384.2px" width="9.6" height="9.6" viewBox="0 0 9.6 9.6"><circle cx="4.8" cy="3.8" r="1.4" fill="#cfd2d8"/><path d="M2.6 7.2 Q2.6 5.4 4.8 5.4 Q7 5.4 7 7.2 Z" fill="#cfd2d8"/></svg>
<div class="t" style="left:285px;top:385.30px;font-size:7.4px;height:7.4px;color:#333;">Cesar Augusto Silva</div>
<div class="t" style="left:396.6px;top:380.80px;font-size:7.4px;height:7.4px;color:#333;">Chefe Dpto. Compras Bens Consumo e...</div>
<div style="left:397.7px;top:390.70000000000005px;width:15.9px;height:7.6px;background:#e6f0fd;border:0.6px solid #c3d8f6;border-radius:1px"></div>
<div class="t c" style="left:399.2px;top:391.30px;font-size:6.4px;height:6.4px;color:#2d6ee8;">采购</div>
<div style="left:416.4px;top:391.6px;width:0.7px;height:5.6px;background:#e2e4e8"></div>
<div class="t c" style="left:420.5px;top:391.50px;font-size:6px;height:6px;color:#a8a8a8;">采购部</div>
<div class="t" style="left:544px;top:385.30px;font-size:7.4px;height:7.4px;color:#999;">-</div>
<div style="left:594.7px;top:387.20px;width:3.6px;height:3.6px;border-radius:50%;background:#f3b322;filter:blur(0.3px)"></div>
<div class="t" style="left:601px;top:385.30px;font-size:7.4px;height:7.4px;color:#333;">cs</div>
<div style="left:607.5px;top:386.5px;width:67.5px;height:6.0px;background:#cfcfd4;filter:blur(0.9px)"></div>
<div class="t" style="left:928.5px;top:385.30px;font-size:7.4px;height:7.4px;color:#999;">-</div>
<div class="t" style="left:1052.5px;top:385.30px;font-size:7.4px;height:7.4px;color:#999;">-</div>
<div style="left:100px;top:415.7px;width:8px;height:8px;border:1px solid #eaebee;border-radius:1px;background:#fff"></div>
<div class="t" style="left:123.7px;top:415.50px;font-size:8.4px;height:8.4px;color:#3d3d3d;transform:scaleX(0.835);transform-origin:0 50%;">COAMO AGROINDUSTRIAL COOPERAT...</div>
<div style="left:271px;top:414.9px;width:9.6px;height:9.6px;border:0.8px solid #e4e6ea;border-radius:50%;background:#fafafa"></div>
<svg style="position:absolute;left:271px;top:414.9px" width="9.6" height="9.6" viewBox="0 0 9.6 9.6"><circle cx="4.8" cy="3.8" r="1.4" fill="#cfd2d8"/><path d="M2.6 7.2 Q2.6 5.4 4.8 5.4 Q7 5.4 7 7.2 Z" fill="#cfd2d8"/></svg>
<div class="t" style="left:285px;top:416.00px;font-size:7.4px;height:7.4px;color:#333;">Aquiles Dias</div>
<div class="t" style="left:396.6px;top:411.50px;font-size:7.4px;height:7.4px;color:#333;">gerente de compras</div>
<div style="left:397.7px;top:421.40000000000003px;width:15.9px;height:7.6px;background:#e6f0fd;border:0.6px solid #c3d8f6;border-radius:1px"></div>
<div class="t c" style="left:399.2px;top:422.00px;font-size:6.4px;height:6.4px;color:#2d6ee8;">采购</div>
<div style="left:416.4px;top:422.3px;width:0.7px;height:5.6px;background:#e2e4e8"></div>
<div class="t c" style="left:420.5px;top:422.20px;font-size:6px;height:6px;color:#a8a8a8;">采购部</div>
<div class="t" style="left:544px;top:416.00px;font-size:7.4px;height:7.4px;color:#999;">-</div>
<div style="left:594.7px;top:417.90px;width:3.6px;height:3.6px;border-radius:50%;background:#f3b322;filter:blur(0.3px)"></div>
<div class="t" style="left:601px;top:416.00px;font-size:7.4px;height:7.4px;color:#333;">a</div>
<div style="left:604.8px;top:416.6px;width:69.80000000000007px;height:5.7999999999999545px;background:#d0d0d4;filter:blur(0.9px)"></div>
<div class="t" style="left:928.5px;top:416.00px;font-size:7.4px;height:7.4px;color:#999;">-</div>
<div class="t" style="left:1052.5px;top:416.00px;font-size:7.4px;height:7.4px;color:#999;">-</div>
<div style="left:100px;top:446.4px;width:8px;height:8px;border:1px solid #eaebee;border-radius:1px;background:#fff"></div>
<div class="t" style="left:123.7px;top:446.20px;font-size:8.4px;height:8.4px;color:#3d3d3d;transform:scaleX(0.835);transform-origin:0 50%;">COAMO AGROINDUSTRIAL COOPERAT...</div>
<div style="left:271px;top:445.59999999999997px;width:9.6px;height:9.6px;border:0.8px solid #e4e6ea;border-radius:50%;background:#fafafa"></div>
<svg style="position:absolute;left:271px;top:445.59999999999997px" width="9.6" height="9.6" viewBox="0 0 9.6 9.6"><circle cx="4.8" cy="3.8" r="1.4" fill="#cfd2d8"/><path d="M2.6 7.2 Q2.6 5.4 4.8 5.4 Q7 5.4 7 7.2 Z" fill="#cfd2d8"/></svg>
<div class="t" style="left:285px;top:446.70px;font-size:7.4px;height:7.4px;color:#333;">Marlon Costa</div>
<div class="t" style="left:396.6px;top:442.20px;font-size:7.4px;height:7.4px;color:#333;">Gerente</div>
<div class="t" style="left:396.6px;top:451.30px;font-size:7.4px;height:7.4px;color:#999;">-</div>
<div class="t" style="left:544px;top:446.70px;font-size:7.4px;height:7.4px;color:#999;">-</div>
<div style="left:594.7px;top:448.60px;width:3.6px;height:3.6px;border-radius:50%;background:#f3b322;filter:blur(0.3px)"></div>
<div class="t" style="left:601px;top:446.70px;font-size:7.4px;height:7.4px;color:#333;">mc</div>
<div style="left:610px;top:446.8px;width:71px;height:5.800000000000011px;background:#d0d0d5;filter:blur(0.9px)"></div>
<div class="t" style="left:1052.5px;top:446.70px;font-size:7.4px;height:7.4px;color:#999;">-</div>
<div style="left:100px;top:477.09999999999997px;width:8px;height:8px;border:1px solid #eaebee;border-radius:1px;background:#fff"></div>
<div class="t" style="left:123.7px;top:476.90px;font-size:8.4px;height:8.4px;color:#3d3d3d;transform:scaleX(0.835);transform-origin:0 50%;">COAMO AGROINDUSTRIAL COOPERAT...</div>
<div style="left:271px;top:476.29999999999995px;width:9.6px;height:9.6px;border:0.8px solid #e4e6ea;border-radius:50%;background:#fafafa"></div>
<svg style="position:absolute;left:271px;top:476.29999999999995px" width="9.6" height="9.6" viewBox="0 0 9.6 9.6"><circle cx="4.8" cy="3.8" r="1.4" fill="#cfd2d8"/><path d="M2.6 7.2 Q2.6 5.4 4.8 5.4 Q7 5.4 7 7.2 Z" fill="#cfd2d8"/></svg>
<div class="t" style="left:285px;top:477.40px;font-size:7.4px;height:7.4px;color:#333;">Ulysses Netto</div>
<div class="t" style="left:396.6px;top:472.90px;font-size:7.4px;height:7.4px;color:#333;">Engenheiro agrônomo</div>
<div class="t" style="left:396.6px;top:482.00px;font-size:7.4px;height:7.4px;color:#999;">-</div>
<div class="t" style="left:544px;top:477.40px;font-size:7.4px;height:7.4px;color:#333;">2004-04</div>
<div style="left:594.7px;top:479.30px;width:3.6px;height:3.6px;border-radius:50%;background:#f3b322;filter:blur(0.3px)"></div>
<div class="t" style="left:601px;top:477.40px;font-size:7.4px;height:7.4px;color:#333;">un</div>
<div style="left:609.4px;top:475.2px;width:70.89999999999998px;height:11.699999999999989px;background:linear-gradient(180deg,#e2e2e6 0%,#e2e2e6 50%,#dcdce0 50%,#dcdce0 100%);filter:blur(0.9px)"></div>
<div class="t" style="left:928.5px;top:477.40px;font-size:7.4px;height:7.4px;color:#999;">-</div>
<div class="t" style="left:1052.5px;top:477.40px;font-size:7.4px;height:7.4px;color:#999;">-</div>
<div style="left:100px;top:507.79999999999995px;width:8px;height:8px;border:1px solid #eaebee;border-radius:1px;background:#fff"></div>
<div class="t" style="left:123.7px;top:507.60px;font-size:8.4px;height:8.4px;color:#3d3d3d;transform:scaleX(0.835);transform-origin:0 50%;">COAMO AGROINDUSTRIAL COOPERAT...</div>
<div style="left:271px;top:506.99999999999994px;width:9.6px;height:9.6px;border:0.8px solid #e4e6ea;border-radius:50%;background:#fafafa"></div>
<svg style="position:absolute;left:271px;top:506.99999999999994px" width="9.6" height="9.6" viewBox="0 0 9.6 9.6"><circle cx="4.8" cy="3.8" r="1.4" fill="#cfd2d8"/><path d="M2.6 7.2 Q2.6 5.4 4.8 5.4 Q7 5.4 7 7.2 Z" fill="#cfd2d8"/></svg>
<div class="t" style="left:285px;top:508.10px;font-size:7.4px;height:7.4px;color:#333;">Rosa Nitsche</div>
<div class="t" style="left:396.6px;top:503.60px;font-size:7.4px;height:7.4px;color:#333;">Chefe Depto.Oper.Portuárias</div>
<div class="t" style="left:396.6px;top:512.70px;font-size:7.4px;height:7.4px;color:#999;">-</div>
<div class="t" style="left:544px;top:508.10px;font-size:7.4px;height:7.4px;color:#333;">1990-11</div>
<div style="left:594.7px;top:510.00px;width:3.6px;height:3.6px;border-radius:50%;background:#f3b322;filter:blur(0.3px)"></div>
<div class="t" style="left:601px;top:508.10px;font-size:7.4px;height:7.4px;color:#333;">rnit.</div>
<div style="left:615px;top:505.3px;width:65.79999999999995px;height:11.199999999999989px;background:linear-gradient(180deg,#ebebee 0%,#ebebee 50%,#d0d0d5 50%,#d0d0d5 100%);filter:blur(0.9px)"></div>
<div class="t" style="left:928.5px;top:508.10px;font-size:7.4px;height:7.4px;color:#999;">-</div>
<div class="t" style="left:1052.5px;top:508.10px;font-size:7.4px;height:7.4px;color:#999;">-</div>
<div style="left:100px;top:538.5px;width:8px;height:8px;border:1px solid #eaebee;border-radius:1px;background:#fff"></div>
<div class="t" style="left:123.7px;top:538.30px;font-size:8.4px;height:8.4px;color:#3d3d3d;transform:scaleX(0.835);transform-origin:0 50%;">COAMO AGROINDUSTRIAL COOPERAT...</div>
<div style="left:271px;top:537.7px;width:9.6px;height:9.6px;border:0.8px solid #e4e6ea;border-radius:50%;background:#fafafa"></div>
<svg style="position:absolute;left:271px;top:537.7px" width="9.6" height="9.6" viewBox="0 0 9.6 9.6"><circle cx="4.8" cy="3.8" r="1.4" fill="#cfd2d8"/><path d="M2.6 7.2 Q2.6 5.4 4.8 5.4 Q7 5.4 7 7.2 Z" fill="#cfd2d8"/></svg>
<div class="t" style="left:285px;top:538.80px;font-size:7.4px;height:7.4px;color:#333;">Pedro Fava Junior</div>
<div class="t" style="left:396.6px;top:534.30px;font-size:7.4px;height:7.4px;color:#333;">Engenheiro Agrônomo</div>
<div class="t" style="left:396.6px;top:543.40px;font-size:7.4px;height:7.4px;color:#999;">-</div>
<div class="t" style="left:544px;top:538.80px;font-size:7.4px;height:7.4px;color:#999;">-</div>
<div style="left:594.7px;top:540.70px;width:3.6px;height:3.6px;border-radius:50%;background:#f3b322;filter:blur(0.3px)"></div>
<div class="t" style="left:601px;top:538.80px;font-size:7.4px;height:7.4px;color:#333;">pj</div>
<div style="left:607px;top:539.5px;width:74px;height:6.0px;background:#d0d0d5;filter:blur(0.9px)"></div>
<div class="t" style="left:928.5px;top:538.80px;font-size:7.4px;height:7.4px;color:#999;">-</div>
<div class="t" style="left:1052.5px;top:538.80px;font-size:7.4px;height:7.4px;color:#999;">-</div>
<div style="left:100px;top:569.1999999999999px;width:8px;height:8px;border:1px solid #eaebee;border-radius:1px;background:#fff"></div>
<div class="t" style="left:123.7px;top:569.00px;font-size:8.4px;height:8.4px;color:#3d3d3d;transform:scaleX(0.835);transform-origin:0 50%;">COAMO AGROINDUSTRIAL COOPERAT...</div>
<div style="left:271px;top:568.4px;width:9.6px;height:9.6px;border:0.8px solid #e4e6ea;border-radius:50%;background:#fafafa"></div>
<svg style="position:absolute;left:271px;top:568.4px" width="9.6" height="9.6" viewBox="0 0 9.6 9.6"><circle cx="4.8" cy="3.8" r="1.4" fill="#cfd2d8"/><path d="M2.6 7.2 Q2.6 5.4 4.8 5.4 Q7 5.4 7 7.2 Z" fill="#cfd2d8"/></svg>
<div class="t" style="left:285px;top:569.50px;font-size:7.4px;height:7.4px;color:#333;">Fagner Gabriel Custodio de ...</div>
<div class="t" style="left:396.6px;top:565.00px;font-size:7.4px;height:7.4px;color:#333;">Business Intelligence Analyst</div>
<div class="t c" style="left:397px;top:575.20px;font-size:6px;height:6px;color:#a0a0a0;">战略与发展部</div>
<div class="t" style="left:544px;top:569.50px;font-size:7.4px;height:7.4px;color:#333;">2021-02</div>
<div style="left:594.7px;top:571.40px;width:3.6px;height:3.6px;border-radius:50%;background:#f3b322;filter:blur(0.3px)"></div>
<div class="t" style="left:601px;top:569.50px;font-size:7.4px;height:7.4px;color:#333;">fol</div>
<div style="left:611px;top:570px;width:70px;height:6px;background:#d0d0d5;filter:blur(0.9px)"></div>
<div class="t" style="left:885.5px;top:569.50px;font-size:7.4px;height:7.4px;color:#333;">Brazil</div>
<div class="t" style="left:928.5px;top:569.50px;font-size:7.4px;height:7.4px;color:#999;">-</div>
<div class="t" style="left:1052.5px;top:569.50px;font-size:7.4px;height:7.4px;color:#999;">-</div>
<div style="left:756px;top:283px;width:126px;height:293px;background:#fff"></div>
<div style="left:756px;top:373.6px;width:126px;height:30.7px;background:#f3f8fe"></div>
<div style="left:756px;top:315.2px;width:25px;height:24.6px;background:#b9d0ec"></div>
<div style="left:756px;top:315.2px;width:12.4px;height:12.3px;background:#b6cdea"></div>
<div style="left:768.4px;top:327.5px;width:12.4px;height:12.3px;background:#c2d6ef"></div>
<div style="left:756px;top:377.2px;width:25px;height:24.6px;background:#b9d0ec"></div>
<div style="left:768.4px;top:377.2px;width:12.4px;height:12.3px;background:#adc8ea"></div>
<div style="left:756px;top:414.4px;width:25px;height:11.8px;background:#dbe7f5"></div>
<div style="left:756px;top:439.1px;width:25px;height:24.6px;background:#b9d0ec"></div>
<div style="left:756px;top:476px;width:25px;height:12.9px;background:#b9d0ec"></div>
<div style="left:756px;top:501.7px;width:25px;height:23.9px;background:#b9d0ec"></div>
<div style="left:756px;top:526.3px;width:126px;height:11.2px;background:#eef2f8"></div>
<div style="left:756px;top:538px;width:25px;height:12.3px;background:#b9d0ec"></div>
<div style="left:756px;top:563.7px;width:25px;height:12.1px;background:#b9d0ec"></div>
<div style="left:793.8px;top:315.2px;width:12.4px;height:12.3px;background:#ddeefa"></div>
<div style="left:806.2px;top:315.2px;width:12.4px;height:12.3px;background:#f3e3e4"></div>
<div style="left:818.6px;top:315.2px;width:12.4px;height:12.3px;background:#dcc6d9"></div>
<div style="left:806.2px;top:327.5px;width:12.4px;height:12.3px;background:#cfe1f5"></div>
<div style="left:818.6px;top:327.5px;width:12.4px;height:12.3px;background:#b3acd8"></div>
<div style="left:831px;top:327.5px;width:12.4px;height:12.3px;background:#c9d7ed"></div>
<div style="left:843.4px;top:327.5px;width:12.4px;height:12.3px;background:#b8c4e4"></div>
<div style="left:868px;top:315.2px;width:12.4px;height:12.3px;background:#f1eff8"></div>
<div style="left:868px;top:327.5px;width:12.4px;height:12.3px;background:#dcc2ca"></div>
<div style="left:806.2px;top:377.2px;width:12.4px;height:12.3px;background:#cfe3f8"></div>
<div style="left:818.6px;top:377.2px;width:12.4px;height:12.3px;background:#9f8dc2"></div>
<div style="left:831px;top:377.2px;width:12.4px;height:12.3px;background:#dcecfa"></div>
<div style="left:843.4px;top:377.2px;width:12.4px;height:12.3px;background:#a9c9ec"></div>
<div style="left:793.8px;top:389.5px;width:12.4px;height:12.3px;background:#dbeefb"></div>
<div style="left:806.2px;top:389.5px;width:12.4px;height:12.3px;background:#bfc1d6"></div>
<div style="left:818.6px;top:389.5px;width:12.4px;height:12.3px;background:#a99ccd"></div>
<div style="left:831px;top:389.5px;width:12.4px;height:12.3px;background:#e8d9c9"></div>
<div style="left:843.4px;top:389.5px;width:12.4px;height:12.3px;background:#a9c8ec"></div>
<div style="left:831px;top:501.7px;width:37px;height:11.8px;background:#fdf6e6"></div>
<div style="left:868px;top:501.7px;width:12.4px;height:11.8px;background:#dcc8d8"></div>
<div style="left:793.8px;top:563.7px;width:12.4px;height:12.1px;background:#dff0fb"></div>
<div style="left:806.2px;top:563.7px;width:12.4px;height:12.1px;background:#c9c6d8"></div>
<div style="left:818.6px;top:563.7px;width:12.4px;height:12.1px;background:#a89ad0"></div>
<div style="left:831px;top:563.7px;width:12.4px;height:12.1px;background:#ecdcc8"></div>
<div style="left:843.4px;top:563.7px;width:12.4px;height:12.1px;background:#b0d0ee"></div>
<div class="t" style="left:882px;top:508.10px;font-size:7.4px;height:7.4px;color:#333;">il</div>
<div style="left:942.6px;top:439px;width:11.8px;height:12.2px;background:#bde0f8"></div>
<div style="left:967.3px;top:439px;width:12.1px;height:22.2px;background:linear-gradient(180deg,#dfc8ea,#ecd8dc)"></div>
<div style="left:992px;top:439px;width:12.1px;height:12.2px;background:#cccccc"></div>
<div class="t" style="left:1016px;top:445.70px;font-size:7.4px;height:7.4px;color:#333;">br</div>
<div class="t" style="left:453.9px;top:438.60px;font-size:7.8px;height:7.8px;color:#3f78e0;">Lorem Ipsum</div>
<div style="left:1164.5px;top:378px;width:20px;height:20px;border-radius:50%;background:#fff;box-shadow:0 0 2px rgba(0,0,0,0.04)"></div>
<div style="left:1168px;top:381px;width:13.6px;height:13.6px;border-radius:50%;background:#e57994"></div>
<svg style="position:absolute;left:1168px;top:381px" width="13.6" height="13.6" viewBox="0 0 13.6 13.6"><path d="M3.2 4 H7 M5.1 3 V4 M3.8 4.2 Q4.6 7.5 7.2 8.2 M6.3 4.2 Q5.6 7.2 3 8.4" fill="none" stroke="#fff" stroke-width="1"/><path d="M7.2 11 L9.2 6 L11.2 11 M7.9 9.4 H10.5" fill="none" stroke="#fff" stroke-width="1"/></svg>
<div style="left:1161.5px;top:490.5px;width:21px;height:21px;border-radius:50%;background:#fff;box-shadow:0 0 3px rgba(0,0,0,0.06)"></div>
<svg style="position:absolute;left:1166.5px;top:495.5px" width="11" height="11" viewBox="0 0 11 11"><path d="M6.5 1.2 H2 V10 H5" fill="none" stroke="#666" stroke-width="1.1"/><path d="M2 1.2 H8.8 V5" fill="none" stroke="#666" stroke-width="1.1"/><path d="M3.5 3.6 H6 M3.5 5.6 H5" stroke="#666" stroke-width="0.9"/><circle cx="7.8" cy="8.2" r="1.7" fill="none" stroke="#666" stroke-width="1.1"/></svg>
<div style="left:1161.5px;top:515.5px;width:21px;height:21px;border-radius:50%;background:#fff;box-shadow:0 0 3px rgba(0,0,0,0.06)"></div>
<svg style="position:absolute;left:1166.5px;top:521.5px" width="11" height="10" viewBox="0 0 11 10"><path d="M1.8 6 V5 A3.7 3.7 0 0 1 9.2 5 V6" fill="none" stroke="#666" stroke-width="1.1"/><rect x="1" y="5" width="1.8" height="2.8" rx="0.6" fill="#666"/><rect x="8.2" y="5" width="1.8" height="2.8" rx="0.6" fill="#666"/><path d="M9 7.5 Q8.8 9.3 5.8 9.3" fill="none" stroke="#666" stroke-width="1"/></svg>
</body></html>
